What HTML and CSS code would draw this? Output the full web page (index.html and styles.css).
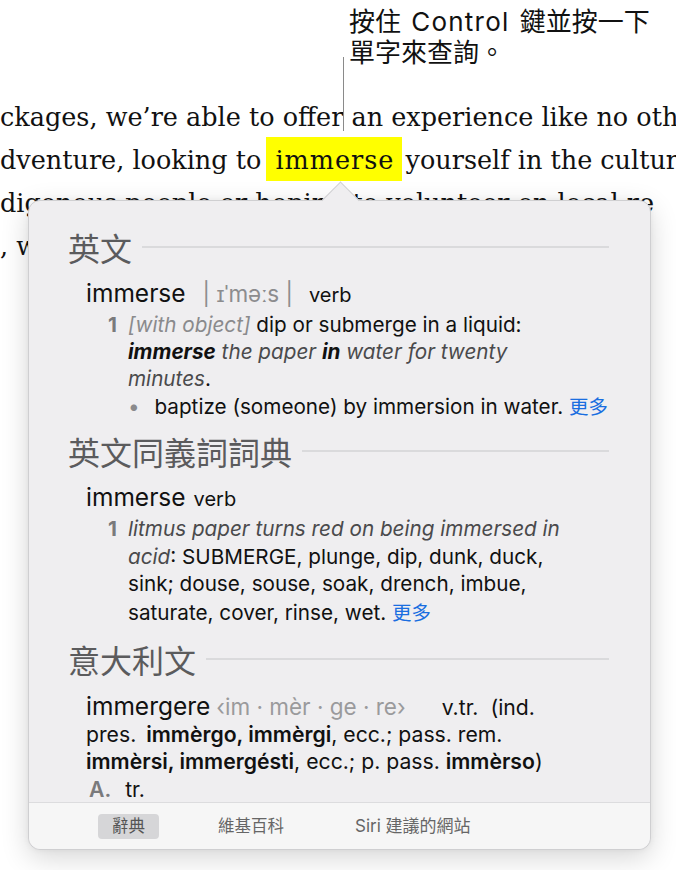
FILE: index.html
```html
<!DOCTYPE html>
<html lang="zh-Hant">
<head>
<meta charset="utf-8">
<link rel="stylesheet" href="styles.css">
</head>
<body>
<div class="page">
  <div class="callout">
    <div>按住 <span class="ctl">Control</span> 鍵並按一下</div>
    <div>單字來查詢。</div>
  </div>
  <div class="leader"></div>
  <div class="prose">
    <div class="ln l1">ckages, we’re able to offer an experience like no other</div>
    <div class="ln l2">dventure, looking to <span class="hl">immerse</span> yourself in the culture</div>
    <div class="ln l3">digenous people or hoping to volunteer on local re</div>
    <div class="ln l4">, with</div>
  </div>

  <div class="popup">
    <div class="arrow"></div>
    <div class="content">
      <div class="sec-head"><span>英文</span><i class="rule"></i></div>
      <div class="entry-head"><span class="hw">immerse</span><span class="pron">| ɪˈməːs |</span><span class="pos">verb</span></div>
      <div class="def">
        <span class="num">1</span>
        <div class="def-body">
          <div><span class="reg">[with object]</span> dip or submerge in a liquid:</div>
          <div><em><b>immerse</b> the paper <b>in</b> water for twenty</em></div>
          <div><em>minutes</em>.</div>
          <div><span class="bullet">•</span> baptize (someone) by immersion in water. <span class="more">更多</span></div>
        </div>
      </div>

      <div class="sec-head s2"><span>英文同義詞詞典</span><i class="rule"></i></div>
      <div class="entry-head e2"><span class="hw">immerse</span><span class="pos">verb</span></div>
      <div class="def d2">
        <span class="num">1</span>
        <div class="def-body">
          <div><em>litmus paper turns red on being immersed in</em></div>
          <div><em>acid</em>: SUBMERGE, plunge, dip, dunk, duck,</div>
          <div>sink; douse, souse, soak, drench, imbue,</div>
          <div>saturate, cover, rinse, wet. <span class="more">更多</span></div>
        </div>
      </div>

      <div class="sec-head s3"><span>意大利文</span><i class="rule"></i></div>
      <div class="ital">
        <div><span class="hw">immergere</span> <span class="syl">‹im · mèr · ge · re›</span><span class="vtr">v.tr.</span><span class="sp">(ind.</span></div>
        <div><span class="pres">pres.</span><b>immèrgo, immèrgi</b>, ecc.; pass. rem.</div>
        <div><b>immèrsi, immergésti</b>, ecc.; p. pass. <b>immèrso</b>)</div>
        <div class="sense"><b class="letter">A.</b> tr.</div>
      </div>
    </div>
    <div class="footer">
      <span class="tab active">辭典</span>
      <span class="tab">維基百科</span>
      <span class="tab siri">Siri 建議的網站</span>
    </div>
  </div>
</div>
</body>
</html>
```

FILE: styles.css
```css
html, body {
  margin: 0;
  padding: 0;
  background: #ffffff;
}
.page {
  position: relative;
  width: 676px;
  height: 870px;
  overflow: hidden;
  font-family: "Inter", "Noto Sans CJK TC", sans-serif;
}
.callout {
  margin-left: 349px;
  padding-top: 6px;
  font-size: 26px;
  line-height: 31px;
  color: #111;
  word-spacing: 3px;
  font-family: "Inter", "Noto Sans CJK TC", sans-serif;
}
.ctl { letter-spacing: 1.2px; }
.leader {
  position: absolute;
  left: 343px;
  top: 57px;
  width: 1px;
  height: 74px;
  background: #8a8a8a;
}
.prose {
  margin-top: 28px;
  font-family: "DejaVu Serif", serif;
  font-size: 25.5px;
  line-height: 43px;
  color: #111;
  white-space: nowrap;
}
.ln { height: 43px; }
.hl {
  background: #ffff00;
  padding: 8px 8px 6px 9px;
  margin: 0 -5px 0 -3px;
  letter-spacing: 1px;
}
.popup {
  position: absolute;
  left: 28px;
  top: 200px;
  width: 623px;
  height: 650px;
  box-sizing: border-box;
  background: #efeef0;
  border: 1px solid #cfcfd1;
  border-radius: 12px;
  box-shadow: 0 8px 28px rgba(0,0,0,0.16), 0 0 6px rgba(0,0,0,0.05);
  display: flex;
  flex-direction: column;
}
.arrow {
  position: absolute;
  left: 298px;
  top: -14px;
  width: 26px;
  height: 26px;
  background: #efeef0;
  border-top: 1px solid #cfcfd1;
  border-left: 1px solid #cfcfd1;
  transform: rotate(45deg);
}
.content {
  position: relative;
  flex: 1;
  overflow: hidden;
  padding: 28px 41px 0 39px;
  color: #1a1a1a;
  border-radius: 12px 12px 0 0;
  white-space: nowrap;
}
.sec-head {
  display: flex;
  align-items: center;
  height: 36px;
  font-size: 32px;
  color: #5b5b5d;
  font-family: "Noto Sans CJK TC", sans-serif;
}
.sec-head span { line-height: 36px; }
.rule {
  flex: 1;
  height: 2px;
  background: #dadadc;
  margin-left: 10px;
}
.s2 { margin-top: 13px; }
.s3 { margin-top: 15px; }
.entry-head {
  margin-top: 13px;
  margin-left: 18px;
  height: 30px;
  line-height: 30px;
  display: flex;
  align-items: baseline;
}
.e2 { margin-top: 13px; }
.hw { font-size: 24.5px; color: #111; }
.pron { font-size: 22.5px; color: #8c8c8e; margin-left: 17px; }
.pos { font-size: 20px; color: #111; margin-left: 16px; }
.e2 .pos { margin-left: 8px; }
.def {
  display: flex;
  margin-left: 40px;
  margin-top: 3px;
  font-size: 20.7px;
  line-height: 27px;
  color: #111;
}
.d2 { margin-top: 3px; }
.d2 .def-body div { height: 27.7px; }
.num {
  width: 20px;
  flex: none;
  font-weight: bold;
  color: #7a7a7c;
}
.def-body { flex: 1; }
.def-body em { color: #4a4a4c; }
.def-body em b { color: #111; }
.reg { color: #8a8a8c; font-style: italic; }
.bullet { color: #8a8a8c; margin-right: 9px; }
.more {
  color: #1a6ee0;
  font-family: "Noto Sans CJK TC", sans-serif;
  font-size: 19.5px;
}
.ital {
  margin-top: 16px;
  margin-left: 18px;
  font-size: 21.2px;
  line-height: 27px;
  color: #111;
}
.ital b { font-weight: 600; }
.ital .hw { font-size: 24.5px; }
.syl { color: #9a9a9c; font-size: 22.5px; margin-right: 36px; }
.sp { margin-left: 12px; }
.pres { margin-right: 10px; }
.sense { margin-left: 3px; margin-top: 1px; }
.letter { color: #7a7a7c; margin-right: 8px; }
.footer {
  height: 46px;
  flex: none;
  background: #f6f6f6;
  border-top: 1px solid #dcdcde;
  border-radius: 0 0 12px 12px;
  display: flex;
  align-items: center;
  padding-left: 69px;
  gap: 59px;
  font-family: "Inter", "Noto Sans CJK TC", sans-serif;
  font-size: 16.5px;
  color: #666;
}
.tab { padding: 3px 0; line-height: 19px; }
.tab.active {
  background: #d6d6d8;
  border-radius: 4px;
  color: #555;
  padding: 3px 14px;
}
.tab.siri { margin-left: 12px; font-size: 17px; }
```
